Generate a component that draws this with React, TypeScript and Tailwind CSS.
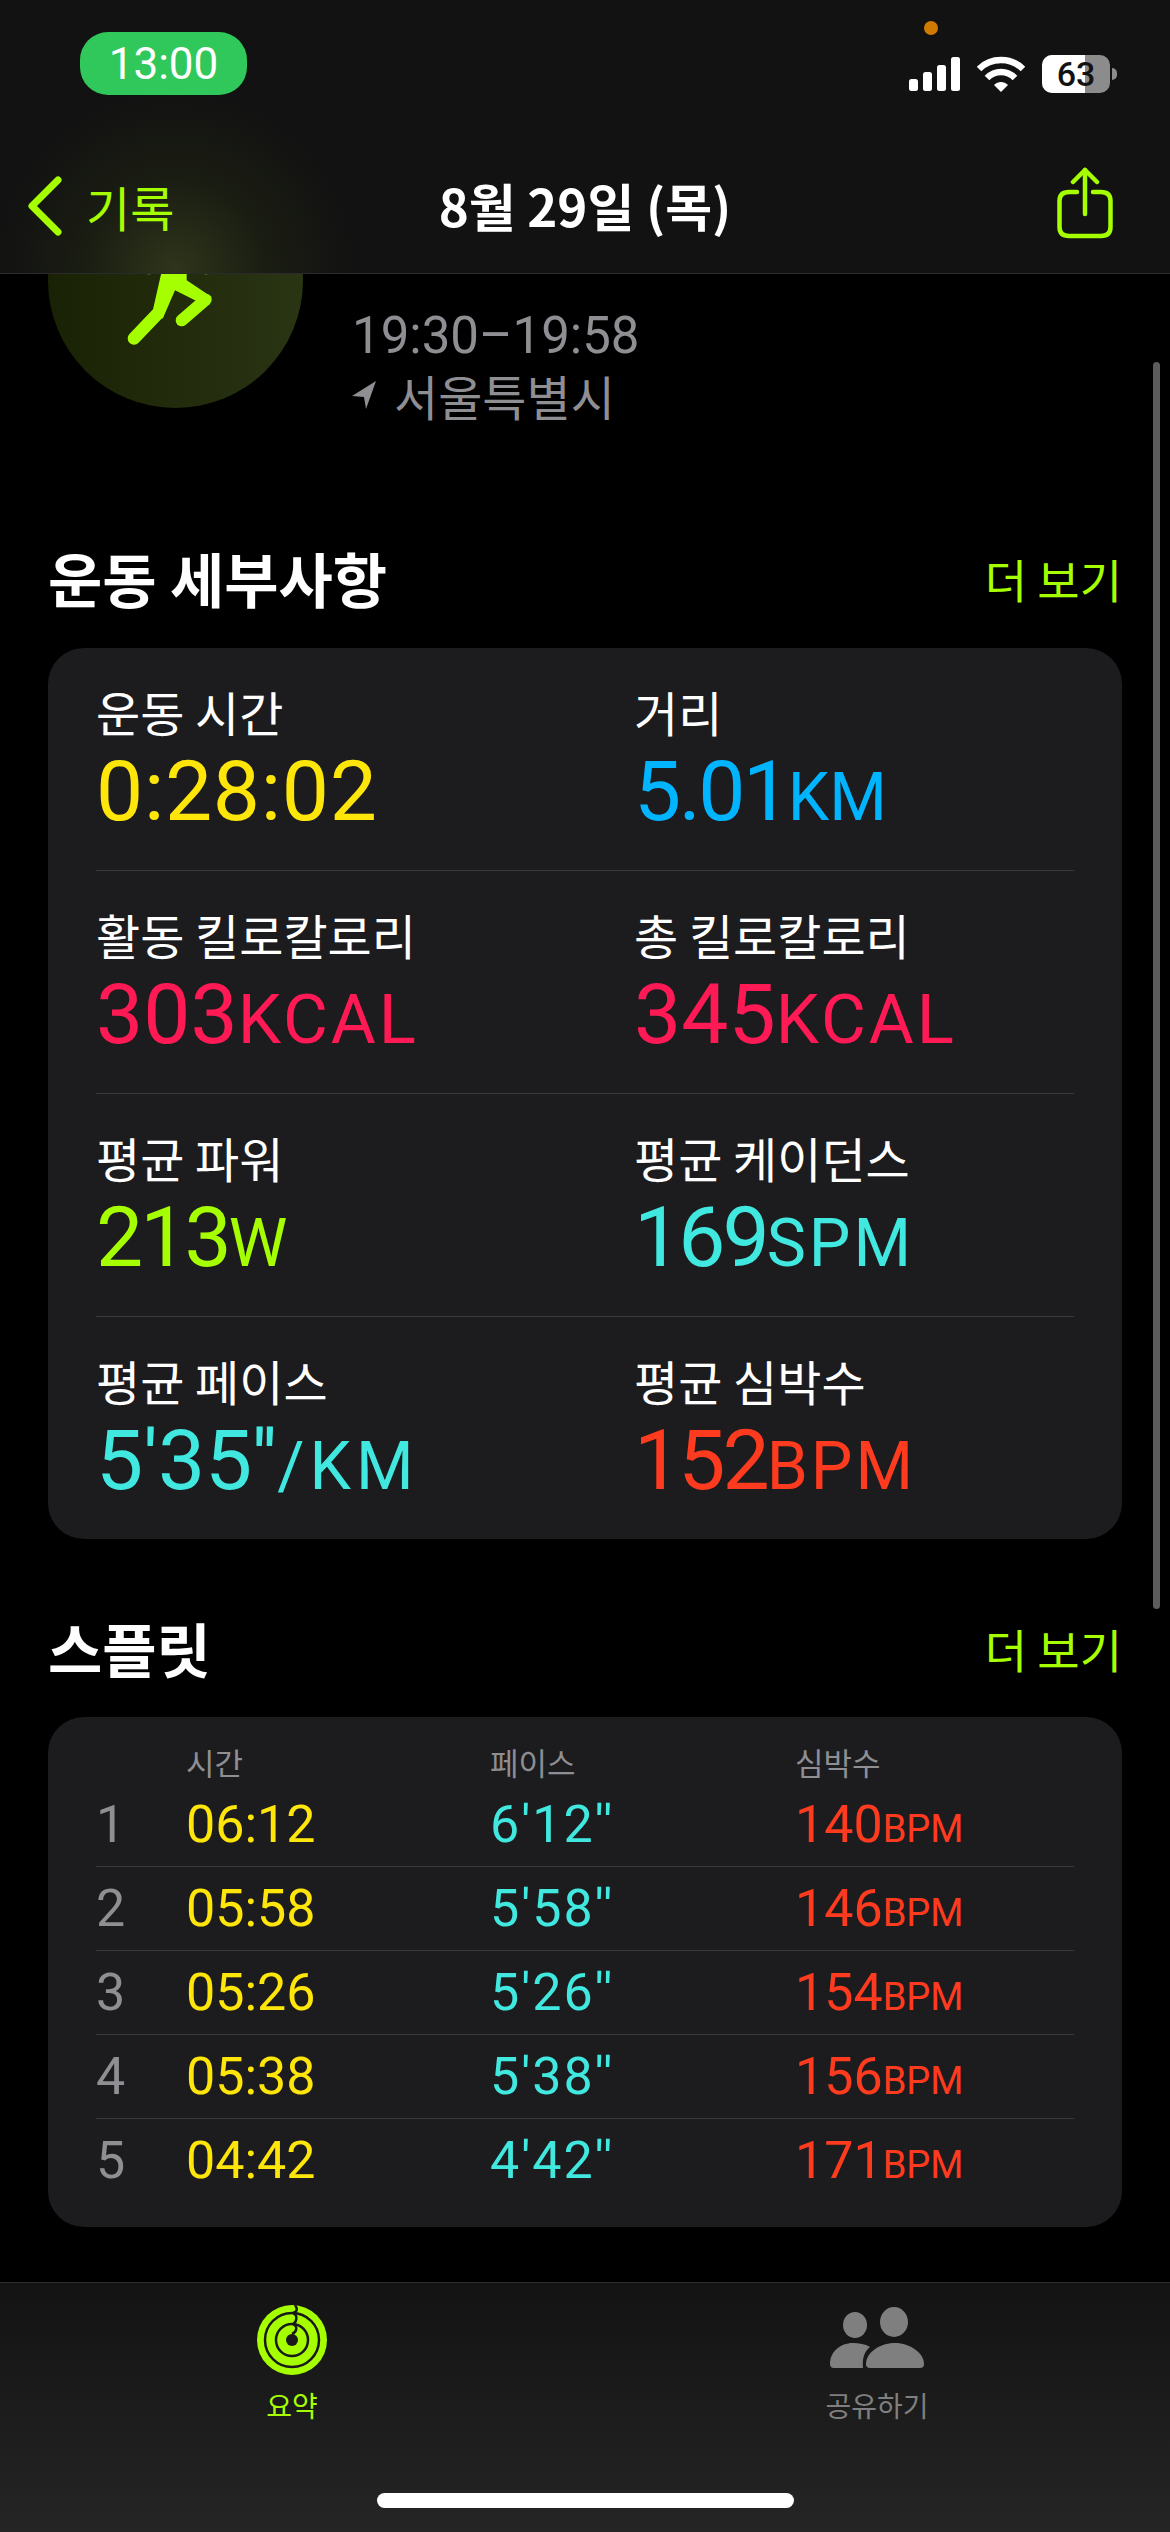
const NUM = "font-['Roboto','Liberation_Sans',sans-serif]";
const KR = "font-['Noto_Sans_CJK_KR','Liberation_Sans',sans-serif]";

const details = [
  [
    { label: "운동 시간", value: "0:28:02", unit: "", color: "text-[#ffe60a]", valueClass: "tracking-[0.7px]", unitClass: "text-[66px]" },
    { label: "거리", value: "5.01", unit: "KM", color: "text-[#00b4ff]", valueClass: "tracking-[-2.5px]", unitClass: "text-[66px] tracking-normal" },
  ],
  [
    { label: "활동 킬로칼로리", value: "303", unit: "KCAL", color: "text-[#ff1a55]", valueClass: "", unitClass: "text-[69px] tracking-[3px]" },
    { label: "총 킬로칼로리", value: "345", unit: "KCAL", color: "text-[#ff1a55]", valueClass: "", unitClass: "text-[69px] tracking-[3px]" },
  ],
  [
    { label: "평균 파워", value: "213", unit: "W", color: "text-[#a6ff00]", valueClass: "tracking-[-3px]", unitClass: "text-[66px] tracking-normal" },
    { label: "평균 케이던스", value: "169", unit: "SPM", color: "text-[#40e8e0]", valueClass: "tracking-[-3px]", unitClass: "text-[66px] tracking-[3px]" },
  ],
  [
    { label: "평균 페이스", value: "5'35''", unit: "/KM", color: "text-[#40e8e0]", valueClass: "", unitClass: "text-[66px] tracking-[5px]" },
    { label: "평균 심박수", value: "152", unit: "BPM", color: "text-[#ff3b1f]", valueClass: "tracking-[-3px]", unitClass: "text-[66px] tracking-[3px]" },
  ],
];

const splits = [
  { n: "1", time: "06:12", pace: "6'12''", bpm: "140" },
  { n: "2", time: "05:58", pace: "5'58''", bpm: "146" },
  { n: "3", time: "05:26", pace: "5'26''", bpm: "154" },
  { n: "4", time: "05:38", pace: "5'38''", bpm: "156" },
  { n: "5", time: "04:42", pace: "4'42''", bpm: "171" },
];

function StatusIcons() {
  return (
    <div className="flex items-center gap-[17px]">
      <svg width="51" height="34" viewBox="0 0 51 34" fill="#fff">
        <rect x="0" y="22" width="9" height="12" rx="2.5" />
        <rect x="14" y="15" width="9" height="19" rx="2.5" />
        <rect x="28" y="8" width="9" height="26" rx="2.5" />
        <rect x="42" y="0" width="9" height="34" rx="2.5" />
      </svg>
      <svg width="48" height="36" viewBox="0 0 48 36" fill="none" stroke="#fff" strokeWidth="6.5">
        <path d="M2 13 C14 1 34 1 46 13" />
        <path d="M10 22 C18 14 30 14 38 22" />
        <path d="M17 29 L24 36 L31 29 C27 25 21 25 17 29 Z" fill="#fff" stroke="none" />
      </svg>
      <div className="flex items-center gap-[2px]">
        <div className="relative flex h-[38px] w-[68px] items-center justify-center overflow-hidden rounded-[10px] bg-[#8c8c8c]">
          <div className="absolute inset-y-0 left-0 w-[43px] bg-white" />
          <span className={`relative text-[34px] font-medium text-[#121212] ${NUM}`}>63</span>
        </div>
        <div className="h-[12px] w-[5px] rounded-r-full bg-[#8c8c8c]" />
      </div>
    </div>
  );
}

function ShareIcon() {
  return (
    <svg width="56" height="72" viewBox="0 0 56 72" fill="none" stroke="#a6ff00" strokeWidth="4.5" strokeLinecap="round" strokeLinejoin="round">
      <path d="M20 25 H12 Q2.5 25 2.5 34 V60 Q2.5 69 12 69 H44 Q53.5 69 53.5 60 V34 Q53.5 25 44 25 H36" />
      <path d="M28 47 V3" />
      <path d="M16 15 L28 3 L40 15" />
    </svg>
  );
}

function Header() {
  return (
    <header className="relative z-10 flex h-[274px] shrink-0 flex-col border-b border-[#2b2b2b] bg-[radial-gradient(circle_at_175px_270px,#2f351b_0px,#1a1d12_90px,#121212_180px)]">
      <div className="flex h-[140px] items-start justify-between pl-[80px] pr-[53px] pt-[32px]">
        <div className={`flex h-[63px] w-[167px] items-center justify-center rounded-[28px] bg-[#30c85a] text-[44px] text-white ${NUM}`}>13:00</div>
        <div className="relative pt-[23px]">
          <div className="absolute left-[15px] top-[-11px] h-[14px] w-[14px] rounded-full bg-[#d17a00]" />
          <StatusIcons />
        </div>
      </div>
      <div className="relative flex flex-1 items-start justify-between pl-[28px] pr-[57px] pt-[27px]">
        <div className="mt-[9px] flex items-center gap-[24px]">
          <svg width="34" height="60" viewBox="0 0 34 60" fill="none" stroke="#a6ff00" strokeWidth="7" strokeLinecap="round" strokeLinejoin="round">
            <path d="M30 4 L4 30 L30 56" />
          </svg>
          <span className={`text-[48px] leading-none text-[#a6ff00] ${KR}`}>기록</span>
        </div>
        <span className={`absolute left-0 right-0 top-[32px] text-center text-[51px] font-semibold leading-[66px] text-white ${KR}`}>8월 29일 (목)</span>
        <ShareIcon />
      </div>
    </header>
  );
}

function SectionTitle({ title }: { title: string }) {
  return (
    <div className="flex items-center justify-between px-[48px]">
      <h2 className={`text-[59px] font-bold leading-none text-white ${KR}`}>{title}</h2>
      <span className={`text-[46px] leading-none text-[#a6ff00] ${KR}`}>더 보기</span>
    </div>
  );
}

function Summary() {
  return (
    <div className="flex gap-[49px] px-[48px]">
      <div className="mt-[-121px] h-[255px] w-[255px] shrink-0 rounded-full bg-gradient-to-r from-[#1a2205] to-[#2a3514]">
        <svg width="255" height="255" viewBox="24 -322 765 765" fill="#a6ff00" stroke="#a6ff00" strokeLinecap="round" strokeLinejoin="round">
          <circle cx="327" cy="28" r="14" stroke="none" />
          <circle cx="498" cy="28" r="14" stroke="none" />
          <path d="M368 20 L338 152 L368 175 L405 90 L465 120 L500 125 L515 110 L440 60 L440 20 Z" stroke="none" />
          <path d="M353 160 L282 234" strokeWidth="38" fill="none" />
          <path d="M497 118 L425 180" strokeWidth="36" fill="none" />
        </svg>
      </div>
      <div className={`pt-[34px] text-[#8e8e93] ${KR}`}>
        <div className={`text-[51px] leading-[55px] ${NUM}`}>19:30–19:58</div>
        <div className="flex items-center gap-[18px] text-[48px] leading-[64px]">
          <svg width="24" height="28" viewBox="0 0 24 28" fill="#8e8e93"><path d="M24 0 L0 15 L12 16 L14 28 Z" /></svg>
          서울특별시
        </div>
      </div>
    </div>
  );
}

function DetailCard() {
  return (
    <div className="mx-[48px] mt-[41px] rounded-[36px] bg-[#1c1c1e] px-[48px]">
      {details.map((row, i) => (
        <div key={i} className={`grid grid-cols-[538px_1fr] pt-[32px] ${i < 3 ? "h-[223px] border-b border-[#3a3a3c]" : "h-[222px]"}`}>
          {row.map((item) => (
            <div key={item.label}>
              <div className={`text-[48px] leading-[62px] text-white ${KR}`}>{item.label}</div>
              <div className={`mt-[5px] whitespace-nowrap text-[84px] leading-[90px] ${item.color} ${item.valueClass} ${NUM}`}>
                {item.value}
                <span className={item.unitClass}>{item.unit}</span>
              </div>
            </div>
          ))}
        </div>
      ))}
    </div>
  );
}

function SplitCard() {
  return (
    <div className="mx-[48px] mt-[40px] rounded-[36px] bg-[#1c1c1e] px-[48px] pb-[24px] pt-[24px]">
      <div className={`grid h-[42px] grid-cols-[90px_304px_305px_1fr] text-[31px] leading-[42px] text-[#8e8e93] ${KR}`}>
        <span />
        <span>시간</span>
        <span>페이스</span>
        <span>심박수</span>
      </div>
      {splits.map((s, i) => (
        <div key={s.n} className={`grid h-[84px] grid-cols-[90px_304px_305px_1fr] items-center text-[52px] ${i < 4 ? "border-b border-[#3a3a3c]" : ""} ${NUM}`}>
          <span className="text-[#8e8e93]">{s.n}</span>
          <span className="text-[#ffe60a]">{s.time}</span>
          <span className="tracking-[2px] text-[#40e8e0]">{s.pace}</span>
          <span className="text-[#ff3b1f]">
            {s.bpm}
            <span className="text-[38px]">BPM</span>
          </span>
        </div>
      ))}
    </div>
  );
}

function TabBar() {
  return (
    <footer className="relative z-10 flex h-[250px] shrink-0 flex-col border-t border-[#2e2e2e] bg-gradient-to-b from-[#131313] to-[#252525]">
      <div className="grid grid-cols-2 pt-[21px]">
        <div className="flex w-[584px] flex-col items-center">
          <svg width="72" height="72" viewBox="0 0 72 72" fill="none" stroke="#1a1a1a" strokeWidth="2.5">
            <circle cx="36" cy="36" r="35" fill="#a6ff00" stroke="none" />
            <circle cx="36" cy="36" r="27" />
            <circle cx="36" cy="36" r="16" />
            <circle cx="36" cy="36" r="6" fill="#1a1a1a" stroke="none" />
            <path d="M39 1 C42 5 41 8 37 9" />
            <path d="M37 9 C42 11 41 18 37 20" />
            <path d="M37 20 C42 22 41 28 36 30" />
          </svg>
          <span className={`mt-[9px] text-[28px] leading-[40px] text-[#a6ff00] ${KR}`}>요약</span>
        </div>
        <div className="flex w-[584px] flex-col items-center">
          <svg width="96" height="72" viewBox="0 0 96 72" fill="#7f7f7f">
            <ellipse cx="26" cy="21" rx="12" ry="13" />
            <ellipse cx="65" cy="18" rx="14" ry="15" />
            <path d="M1 60 C1 48 11 39 24 39 C30 39 36 40 41 43 C36 47 33 53 34 64 H5 Q1 64 1 60 Z" />
            <path d="M37 60 C37 49 50 39 66 39 C81 39 95 49 95 60 Q95 64 91 64 H41 Q37 64 37 60 Z" />
          </svg>
          <span className={`mt-[9px] text-[28px] leading-[40px] text-[#7f7f7f] ${KR}`}>공유하기</span>
        </div>
      </div>
      <div className="absolute bottom-[24px] left-[377px] h-[15px] w-[417px] rounded-full bg-white" />
    </footer>
  );
}

export default function App() {
  return (
    <div className="relative flex h-[2532px] w-[1170px] flex-col overflow-hidden bg-black">
      <Header />
      <main className="flex-1 overflow-hidden">
        <Summary />
        <div className="mt-[121px]"><SectionTitle title="운동 세부사항" /></div>
        <DetailCard />
        <div className="mt-[79px]"><SectionTitle title="스플릿" /></div>
        <SplitCard />
      </main>
      <TabBar />
      <div className="absolute left-[1153px] top-[362px] h-[1247px] w-[7px] rounded-full bg-[#5c5c5c]" />
    </div>
  );
}
